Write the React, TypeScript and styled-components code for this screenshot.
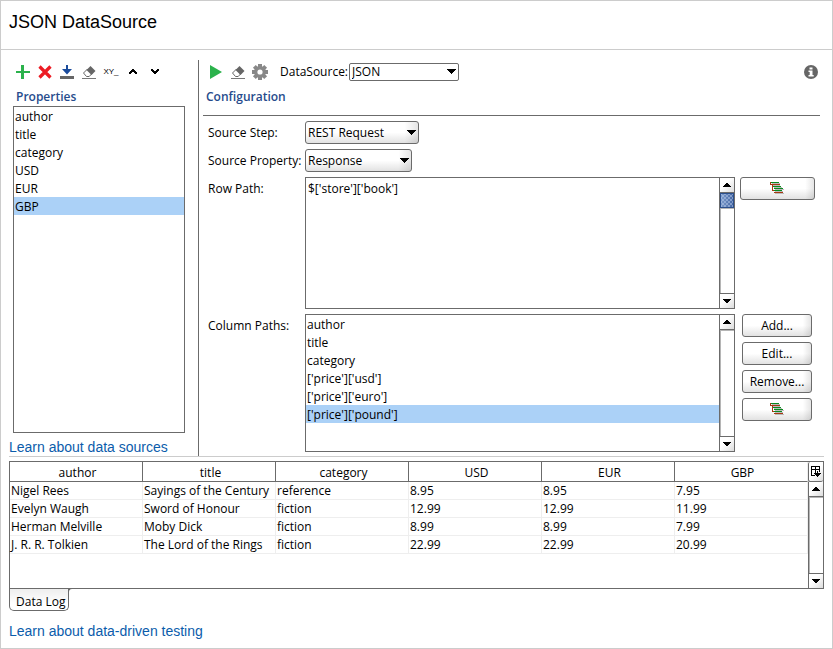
import React, { useState } from 'react';
import styled, { createGlobalStyle, css } from 'styled-components';

const LINE = '#6b6b6b';
const SOFT = '#cccccc';
const SELECTED = '#abd1f7';
const UI = '"Open Sans", "Noto Sans", sans-serif';
const HELP = '"Liberation Sans", Arial, sans-serif';

const GlobalStyle = createGlobalStyle`
  *, *::before, *::after { box-sizing: border-box; }
  body { margin: 0; background: #fff; color: #000; font: 12px/18px ${UI}; }
  button, select, textarea { font: inherit; color: inherit; }
`;

const Window = styled.main`
  min-height: 100vh;
  border: 1px solid ${SOFT};
`;

const Header = styled.header`
  padding: 10px 8px 16px;
  border-bottom: 1px solid ${SOFT};
`;

const Title = styled.h1`
  margin: 0;
  font: 18px/22px ${HELP};
`;

const Content = styled.div`
  padding: 10px 8px 8px;
`;

const Workspace = styled.div`
  display: grid;
  grid-template-columns: 189px minmax(0, 1fr);
  border-bottom: 1px solid ${SOFT};
`;

const Side = styled.section`
  display: flex;
  flex-direction: column;
  padding-top: 1px;
`;

const Detail = styled.section`
  border-left: 1px solid ${LINE};
  padding: 1px 0 4px 4px;
`;

const Toolbar = styled.div<{ $inset: number }>`
  display: flex;
  align-items: center;
  height: 22px;
  padding: 0 2px 0 ${p => p.$inset}px;
`;

const ToolButton = styled.button`
  display: grid;
  place-items: center;
  width: 22px;
  height: 22px;
  padding: 0;
  border: 0;
  background: none;
`;

const ToolText = styled.span`
  font: 8px/10px ${HELP};
`;

const Spacer = styled.div`
  flex: 1;
`;

const PanelTitle = styled.h2<{ $inset: number }>`
  margin: 5px 0 0;
  padding-left: ${p => p.$inset}px;
  font: 600 12px/18px ${UI};
  color: #264b8c;
`;

const List = styled.ul`
  flex: 1;
  margin: 0;
  padding: 0;
  list-style: none;
`;

const Item = styled.li<{ $selected: boolean }>`
  height: 18px;
  padding-left: 1px;
  line-height: 20px;
  white-space: nowrap;
  background: ${p => (p.$selected ? SELECTED : 'transparent')};
`;

const SideListBox = styled.div`
  flex: 1;
  margin: 0 13px 5px 4px;
  border: 1px solid ${LINE};
`;

const HelpLink = styled.a`
  display: block;
  width: max-content;
  font: 14px/18px ${HELP};
  color: #0b5cab;
  text-decoration: none;
`;

const SelectLabel = styled.label`
  margin: 0 1px 0 9px;
`;

const SelectWrap = styled.div<{ $width: number }>`
  position: relative;
  width: ${p => p.$width}px;
  svg {
    position: absolute;
    right: 3px;
    top: calc(50% - 3px);
    pointer-events: none;
  }
`;

const raised = css`
  border: 1px solid ${LINE};
  border-radius: 3px;
  background: linear-gradient(90deg, transparent 88%, rgba(0, 0, 0, 0.1)), linear-gradient(#fff 50%, #e2e2e2);
`;

const Select = styled.select<{ $flat?: boolean }>`
  appearance: none;
  display: block;
  width: 100%;
  height: ${p => (p.$flat ? 18 : 23)}px;
  padding: 0 16px 0 2px;
  ${raised}
  ${p => p.$flat && css`background: #fff; border-radius: 2px; line-height: 16px;`}
`;

const Form = styled.div`
  display: grid;
  grid-template-columns: 97px minmax(0, 1fr) 80px;
  gap: 5px 0;
  margin: 9px 4px 0 0;
  padding: 5px 0 0 5px;
  border-top: 1px solid ${LINE};
`;

const FieldLabel = styled.label`
  line-height: 23px;
`;

const Field = styled.div<{ $height?: number }>`
  display: flex;
  min-height: ${p => p.$height ?? 23}px;
  margin-right: 5px;
`;

const Wide = styled.div`
  grid-column: 2 / 4;
`;

const ScrollBox = styled.div`
  display: flex;
  flex: 1;
  border: 1px solid ${LINE};
`;

const PathInput = styled.textarea`
  flex: 1;
  min-width: 0;
  padding: 2px;
  border: 0;
  outline: 0;
  resize: none;
  overflow: hidden;
  background: #fff;
`;

const Scroll = styled.div`
  display: flex;
  flex: 1;
  flex-direction: column;
  width: 15px;
  border-left: 1px solid ${LINE};
`;

const ScrollHolder = styled.div`
  display: flex;
  flex: none;
  width: 15px;
`;

const ScrollButton = styled.button`
  display: grid;
  place-items: center;
  height: 15px;
  padding: 0;
  border: 0 solid ${LINE};
  background: linear-gradient(135deg, #fff 40%, #dcdcdc);
  &:first-child { border-bottom-width: 1px; }
  &:last-child { border-top-width: 1px; }
`;

const Track = styled.div`
  flex: 1;
  box-shadow: inset 1px 1px 0 #b5b5b5;
`;

const Thumb = styled.div`
  height: 15px;
  border: 1px solid #2c4f8c;
  background:
    radial-gradient(circle, #b9cbea 20%, transparent 30%) 0 0 / 4px 4px,
    radial-gradient(circle, #b9cbea 20%, transparent 30%) 2px 2px / 4px 4px,
    linear-gradient(90deg, #7d9ccc, #4466a3);
`;

const Actions = styled.div`
  display: flex;
  flex-direction: column;
  gap: 5px;
  padding-left: 2px;
`;

const PushButton = styled.button<{ $wide?: boolean }>`
  display: grid;
  place-items: center;
  width: ${p => (p.$wide ? 75 : 70)}px;
  height: 23px;
  padding: 0 ${p => (p.$wide ? 1 : 0)}px 0 0;
  line-height: 20px;
  ${raised}
`;

const Log = styled.div`
  display: flex;
  min-height: 128px;
  margin-top: 4px;
  border: 1px solid ${LINE};
`;

const LogGrid = styled.div`
  flex: 1;
  min-width: 0;
`;

const Table = styled.table`
  width: 100%;
  table-layout: fixed;
  border-collapse: separate;
  border-spacing: 0;
`;

const Th = styled.th`
  height: 20px;
  padding: 2px 0 0 3px;
  border-right: 1px solid ${LINE};
  border-bottom: 1px solid ${LINE};
  font-weight: 400;
  line-height: 17px;
  &:last-child { border-right-color: #eee; }
`;

const Td = styled.td`
  height: 18px;
  padding: 0 0 0 1px;
  border-right: 1px solid #eee;
  border-bottom: 1px solid #eee;
  line-height: 17px;
  white-space: nowrap;
`;

const LogSide = styled.div`
  display: flex;
  flex-direction: column;
  width: 15px;
`;

const ColumnsButton = styled.button`
  display: grid;
  place-items: center;
  height: 20px;
  padding: 0;
  border: 1px solid ${LINE};
  border-width: 0 0 1px 1px;
  border-radius: 2px;
  background: linear-gradient(135deg, #fff 50%, #dcdcdc);
`;

const Tab = styled.button`
  position: relative;
  display: block;
  height: 22px;
  padding: 4px 3px 0 6px;
  border: 1px solid ${LINE};
  border-top: 0;
  border-radius: 0 0 5px 5px;
  background: linear-gradient(#eee, #fff 70%);
  line-height: 17px;
  &::after {
    content: '';
    position: absolute;
    left: 100%;
    top: -1px;
    width: 4px;
    height: 4px;
    border: 1px solid ${LINE};
    border-width: 1px 0 0 1px;
    border-top-left-radius: 4px;
  }
`;

const LogLink = styled(HelpLink)`
  margin-top: 11px;
`;

const Plus = () => (
  <svg width="14" height="14" shapeRendering="crispEdges">
    <path d="M5 0h3v6h6v2H8v6H5V8H0V6h5z" fill="#2bb24c" />
  </svg>
);

const Cross = () => (
  <svg width="14" height="14">
    <path d="M1.5 1.5l11 11M12.500 1.500l-11 11" stroke="#ec1c24" strokeWidth="3.200" />
  </svg>
);

const Download = () => (
  <svg width="14" height="14">
    <path d="M6 0h2v4h4L7 9.500 2 4h4z" fill="#1a4b9c" />
    <path d="M0 11h14v3H0z" fill="#666" />
  </svg>
);

const Eraser = () => (
  <svg width="14" height="14">
    <path d="M1.500 8L5.500 4l4.500 4.500L7.200 11.500H4.500z" fill="#fff" stroke="#666" />
    <path d="M8.500 1L13.500 6l-4 4L4.500 5z" fill="#666" />
    <path d="M0 13h14v1H0z" fill="#777" />
  </svg>
);

const Chevron = ({ down }: { down?: boolean }) => (
  <svg width="8" height="6" shapeRendering="crispEdges">
    <path
      d={down ? 'M0 0h2v1h1v1h2V1h1V0h2v2H7v1H6v1H5v1H3V4H2V3H1V2H0z' : 'M3 0h2v1h1v1h1v1h1v2H6V4H5V3H3v1H2v1H0V3h1V2h1V1h1z'}
    />
  </svg>
);

const Play = () => (
  <svg width="14" height="14">
    <path d="M1 0l12 7-12 7z" fill="#2bb24c" />
  </svg>
);

const Gear = () => (
  <svg width="16" height="16" viewBox="-8 -8 16 16" fill="#888">
    {[0, 45, 90, 135].map(a => (
      <rect key={a} x="-2" y="-8" width="4" height="16" transform={`rotate(${a})`} />
    ))}
    <circle r="6" />
    <circle r="2.600" fill="#fff" />
  </svg>
);

const Info = () => (
  <svg width="14" height="14">
    <circle cx="7" cy="7" r="7" fill="#666" />
    <path d="M5.500 2.500h3v2h-3zM4.500 5.500h4v4.500h1.200v1.500H4.500V10h1.200V7H4.500z" fill="#fff" />
  </svg>
);

const Triangle = ({ up }: { up?: boolean }) => (
  <svg width="8" height="4" shapeRendering="crispEdges">
    <path d={up ? 'M3 0h2v1h1v1h1v1h1v1H0V3h1V2h1V1h1z' : 'M0 0h8v1H7v1H6v1H5v1H3V3H2V2H1V1H0z'} />
  </svg>
);

const SelectArrow = () => (
  <svg width="9" height="5" shapeRendering="crispEdges">
    <path d="M0 0h9v1H8v1H7v1H6v1H5v1H4V4H3V3H2V2H1V1H0z" />
  </svg>
);

const Tree = () => (
  <svg width="14" height="13" shapeRendering="crispEdges">
    <path d="M2 1h8v1H2zM2 3h8v1H2zM4 5h8v1H4zM5 7h9v1H5zM5 9h8v1H5zM5 11h9v1H5z" fill="#bbb" />
    <path d="M1 0h8v1H1zM3 4h8v1H3zM4 6h9v1H4zM4 8h8v1H4z" fill="#0a8a1e" />
    <path d="M0 0h1v2h9v1H0zM2 3h1v5h1v2h9v1H4V9H2z" fill="#a63a12" />
  </svg>
);

const ColumnsIcon = () => (
  <svg width="10" height="11" shapeRendering="crispEdges">
    <path d="M0 0h9v6H8V4H5v3H4V4H1v5h3v1H0zM1 1v2h3V1zM5 1v2h3V1z" fillRule="evenodd" />
    <path d="M6 5h1v2h3v1H9v1H8v1H7v1H6v-1H5V9H4V8H3V7h3z" />
  </svg>
);

const ScrollBar = ({ thumb, target }: { thumb?: boolean; target: string }) => (
  <Scroll>
    <ScrollButton aria-label={`Scroll ${target} up`}><Triangle up /></ScrollButton>
    {thumb && <Thumb />}
    <Track />
    <ScrollButton aria-label={`Scroll ${target} down`}><Triangle /></ScrollButton>
  </Scroll>
);

const Options = ({ items, initial, label }: { items: string[]; initial: string; label: string }) => {
  const [selected, setSelected] = useState(initial);
  return (
    <List role="listbox" aria-label={label}>
      {items.map(item => (
        <Item
          key={item}
          role="option"
          aria-selected={item === selected}
          $selected={item === selected}
          onClick={() => setSelected(item)}
        >
          {item}
        </Item>
      ))}
    </List>
  );
};

const properties = ['author', 'title', 'category', 'USD', 'EUR', 'GBP'];
const columnPaths = ['author', 'title', 'category', "['price']['usd']", "['price']['euro']", "['price']['pound']"];
const rows = [
  ['Nigel Rees', 'Sayings of the Century', 'reference', '8.95', '8.95', '7.95'],
  ['Evelyn Waugh', 'Sword of Honour', 'fiction', '12.99', '12.99', '11.99'],
  ['Herman Melville', 'Moby Dick', 'fiction', '8.99', '8.99', '7.99'],
  ['J. R. R. Tolkien', 'The Lord of the Rings', 'fiction', '22.99', '22.99', '20.99'],
];

export default function App() {
  return (
    <Window>
      <GlobalStyle />
      <Header>
        <Title>JSON DataSource</Title>
      </Header>
      <Content>
        <Workspace>
          <Side>
            <Toolbar $inset={3}>
              <ToolButton aria-label="Add property"><Plus /></ToolButton>
              <ToolButton aria-label="Remove property"><Cross /></ToolButton>
              <ToolButton aria-label="Load properties"><Download /></ToolButton>
              <ToolButton aria-label="Clear properties"><Eraser /></ToolButton>
              <ToolButton aria-label="Rename property"><ToolText>XY_</ToolText></ToolButton>
              <ToolButton aria-label="Move up"><Chevron /></ToolButton>
              <ToolButton aria-label="Move down"><Chevron down /></ToolButton>
            </Toolbar>
            <PanelTitle $inset={7}>Properties</PanelTitle>
            <SideListBox>
              <Options items={properties} initial="GBP" label="Properties" />
            </SideListBox>
            <HelpLink href="#data-sources">Learn about data sources</HelpLink>
          </Side>
          <Detail>
            <Toolbar $inset={2}>
              <ToolButton aria-label="Run"><Play /></ToolButton>
              <ToolButton aria-label="Clear log"><Eraser /></ToolButton>
              <ToolButton aria-label="Options"><Gear /></ToolButton>
              <SelectLabel htmlFor="source">DataSource:</SelectLabel>
              <SelectWrap $width={110}>
                <Select id="source" $flat><option>JSON</option></Select>
                <SelectArrow />
              </SelectWrap>
              <Spacer />
              <ToolButton aria-label="Help"><Info /></ToolButton>
            </Toolbar>
            <PanelTitle $inset={3}>Configuration</PanelTitle>
            <Form>
              <FieldLabel htmlFor="step">Source Step:</FieldLabel>
              <Wide>
                <SelectWrap $width={114}>
                  <Select id="step"><option>REST Request</option></Select>
                  <SelectArrow />
                </SelectWrap>
              </Wide>
              <FieldLabel htmlFor="property">Source Property:</FieldLabel>
              <Wide>
                <SelectWrap $width={107}>
                  <Select id="property"><option>Response</option></Select>
                  <SelectArrow />
                </SelectWrap>
              </Wide>
              <FieldLabel htmlFor="rowpath">Row Path:</FieldLabel>
              <Field $height={132}>
                <ScrollBox>
                  <PathInput id="rowpath" defaultValue="$['store']['book']" />
                  <ScrollHolder><ScrollBar thumb target="row path" /></ScrollHolder>
                </ScrollBox>
              </Field>
              <div>
                <PushButton $wide aria-label="Select row path"><Tree /></PushButton>
              </div>
              <FieldLabel as="span">Column Paths:</FieldLabel>
              <Field $height={138}>
                <ScrollBox>
                  <Options items={columnPaths} initial="['price']['pound']" label="Column Paths" />
                  <ScrollHolder><ScrollBar target="column paths" /></ScrollHolder>
                </ScrollBox>
              </Field>
              <Actions>
                <PushButton>Add...</PushButton>
                <PushButton>Edit...</PushButton>
                <PushButton>Remove...</PushButton>
                <PushButton aria-label="Select column path"><Tree /></PushButton>
              </Actions>
            </Form>
          </Detail>
        </Workspace>
        <Log>
          <LogGrid>
            <Table>
              <thead>
                <tr>{properties.map(name => <Th key={name} scope="col">{name}</Th>)}</tr>
              </thead>
              <tbody>
                {rows.map(row => (
                  <tr key={row[0]}>{row.map((cell, i) => <Td key={i}>{cell}</Td>)}</tr>
                ))}
              </tbody>
            </Table>
          </LogGrid>
          <LogSide>
            <ColumnsButton aria-label="Choose columns"><ColumnsIcon /></ColumnsButton>
            <ScrollBar target="data log" />
          </LogSide>
        </Log>
        <Tab>Data Log</Tab>
        <LogLink href="#data-driven-testing">Learn about data-driven testing</LogLink>
      </Content>
    </Window>
  );
}
